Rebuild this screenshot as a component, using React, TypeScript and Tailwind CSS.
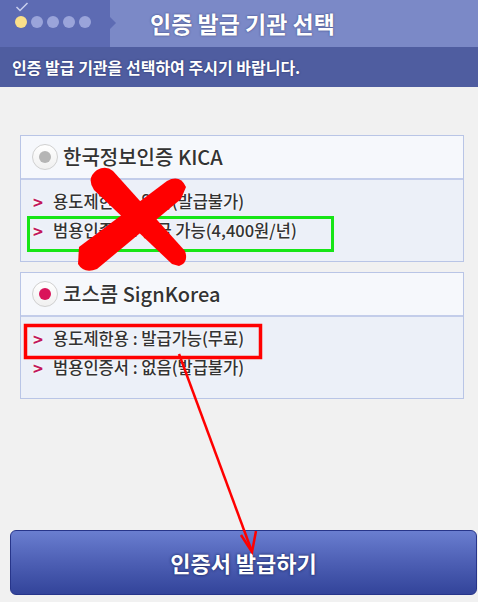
const KR = { fontFamily: '"Noto Sans CJK KR", "Noto Sans", sans-serif' };

const lightGlow = { textShadow: "0 0 2px #fff, 0 0 3px #fff" };
const darkGlow = { textShadow: "0 0 2px rgba(20,30,80,0.7)" };

interface Provider {
  name: string;
  selected: boolean;
  rows: string[];
}

const providers: Provider[] = [
  {
    name: "한국정보인증 KICA",
    selected: false,
    rows: ["용도제한용 : 없음(발급불가)", "범용인증서 : 발급 가능(4,400원/년)"],
  },
  {
    name: "코스콤 SignKorea",
    selected: true,
    rows: ["용도제한용 : 발급가능(무료)", "범용인증서 : 없음(발급불가)"],
  },
];

export default function App() {
  return (
    <div
      className="relative flex h-[602px] w-[478px] flex-col overflow-hidden bg-[#f1f1f1]"
      style={KR}
    >
      <Header />
      <div className="h-[40px] shrink-0 bg-[#4f5da0] pl-3 text-[16px] font-bold leading-[40px] text-white" style={darkGlow}>
        인증 발급 기관을 선택하여 주시기 바랍니다.
      </div>

      <div className="ml-[20px] mr-[14px] mt-[48px] flex flex-col gap-[10px]">
        {providers.map((p) => (
          <ProviderCard key={p.name} provider={p} />
        ))}
      </div>

      <button
        className="mb-[7px] ml-[10px] mr-[1px] mt-auto h-[65px] rounded-[6px] border border-[#27358a] bg-gradient-to-b from-[#6a7ed0] via-[#4d5fb4] to-[#33449a] text-[22px] font-bold text-white"
        style={{ ...KR, textShadow: "0 0 3px rgba(10,20,70,0.9)" }}
      >
        인증서 발급하기
      </button>

      <Annotations />
    </div>
  );
}

/*******************
 * Components
 */

const Header = () => (
  <div className="flex h-[47px] shrink-0 bg-[#7b89c7]">
    <div className="relative w-[110px] bg-[#5d6bb3]">
      <svg className="absolute left-[15px] top-[2px]" width="14" height="10" viewBox="0 0 14 10">
        <path d="M1.5 5 L5 8.5 L12.5 1" fill="none" stroke="#c9cfee" strokeWidth="1.5" />
      </svg>
      <div className="absolute left-[15px] top-[16px] flex gap-[4px]">
        <span className="h-[12px] w-[12px] rounded-full bg-[#fbe08a]" />
        <span className="h-[12px] w-[12px] rounded-full bg-[#9aa4da]" />
        <span className="h-[12px] w-[12px] rounded-full bg-[#9aa4da]" />
        <span className="h-[12px] w-[12px] rounded-full bg-[#9aa4da]" />
        <span className="h-[12px] w-[12px] rounded-full bg-[#9aa4da]" />
      </div>
      <span className="absolute right-[-6px] top-[17px] h-0 w-0 border-y-[6px] border-l-[6px] border-y-transparent border-l-[#5d6bb3]" />
    </div>
    <div className="flex-1 pl-[40px] text-[23px] font-bold leading-[46px] text-white" style={darkGlow}>
      인증 발급 기관 선택
    </div>
  </div>
);

const ProviderCard = ({ provider }: { provider: Provider }) => (
  <div className="border border-[#b9c5e6]">
    <div className="flex h-[44px] items-center gap-[5px] border-b-2 border-[#c3cdea] bg-[#f6f8fc] pl-[11px]">
      <span className="flex h-[26px] w-[26px] items-center justify-center rounded-full border border-[#d0d0d0] bg-gradient-to-b from-white to-[#f0f0f0]">
        <span
          className={
            provider.selected
              ? "h-[12px] w-[12px] rounded-full bg-[#d9145a]"
              : "h-[12px] w-[12px] rounded-full bg-[#b5b5b5]"
          }
        />
      </span>
      <span className="text-[20px] font-medium text-[#333]" style={lightGlow}>
        {provider.name}
      </span>
    </div>
    <div className="flex h-[81px] flex-col bg-[#ecf0f8] pl-[12px] pt-[7px]">
      {provider.rows.map((row) => (
        <div key={row} className="flex h-[29px] items-center gap-[10px] text-[16.5px] font-medium text-[#333]" style={lightGlow}>
          <span className="text-[17px] font-bold text-[#c2185b]">&gt;</span>
          <span>{row}</span>
        </div>
      ))}
    </div>
  </div>
);

const Annotations = () => (
  <svg className="pointer-events-none absolute left-0 top-0" width="478" height="602" viewBox="0 0 478 602">
    <rect x="28.5" y="217.5" width="304" height="33" fill="none" stroke="#16e516" strokeWidth="3" />
    <rect x="25.5" y="325.5" width="235" height="32" fill="none" stroke="#ff0000" strokeWidth="3.5" />
    <line x1="179" y1="354" x2="251" y2="549" stroke="#ff0000" strokeWidth="2.5" />
    <path d="M241 535 L252 552 L256 531" fill="none" stroke="#ff0000" strokeWidth="2.5" />
    <path
      d="M113 171 L185 251 Q189 263 179 266 L172 264 L94 190 Q86 178 97 170 Q106 165 113 171 Z"
      fill="#ff0000"
    />
    <path
      d="M167 181 Q180 174 186 187 L181 199 L97 269 Q84 274 78 264 L79 247 Z"
      fill="#ff0000"
    />
  </svg>
);
